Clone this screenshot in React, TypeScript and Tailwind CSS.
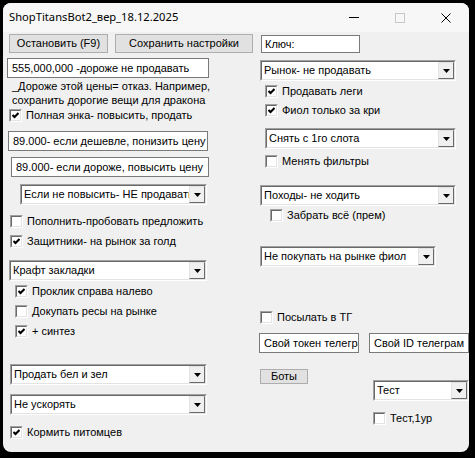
import React from 'react';

// Classic WinForms bits: sunken combo, 3D checkbox, flat textbox and button.

function TextBox({ text, className }: { text: string; className?: string }) {
  return (
    <div className={`h-5 bg-white border border-[#7a7a7a] pl-[4px] flex items-center whitespace-nowrap overflow-hidden ${className ?? ''}`}>
      {text}
    </div>
  );
}

function Button({ label, className }: { label: string; className?: string }) {
  return (
    <div className={`bg-[#e1e1e1] border border-[#adadad] flex items-center justify-center whitespace-nowrap ${className ?? ''}`}>
      {label}
    </div>
  );
}

function Check({ label, checked, className }: { label: string; checked?: boolean; className?: string }) {
  return (
    <div className={`h-4 flex items-center gap-[4px] whitespace-nowrap ${className ?? ''}`}>
      <span className="w-[13px] h-[13px] shrink-0 border border-t-[#a0a0a0] border-l-[#a0a0a0] border-r-white border-b-white">
        <span className="w-full h-full flex items-center justify-center bg-white border border-t-[#696969] border-l-[#696969] border-r-[#e3e3e3] border-b-[#e3e3e3]">
          {checked && (
            <svg width="7" height="7" viewBox="0 0 7 7">
              <path d="M0.5 3 L2.5 5 L6.5 1" fill="none" stroke="#000" strokeWidth="2" />
            </svg>
          )}
        </span>
      </span>
      <span>{label}</span>
    </div>
  );
}

function Combo({ label, className }: { label: string; className?: string }) {
  return (
    <div className={`h-[21px] flex border border-t-[#a0a0a0] border-l-[#a0a0a0] border-r-white border-b-white ${className ?? ''}`}>
      <div className="flex-1 min-w-0 flex bg-white border border-t-[#696969] border-l-[#696969] border-r-[#e3e3e3] border-b-[#e3e3e3]">
        <span className="flex-1 min-w-0 overflow-hidden whitespace-nowrap pl-[2px] leading-[17px]">{label}</span>
        <span className="w-[16px] h-full shrink-0 flex items-center justify-center bg-[#f0f0f0] border border-t-[#e3e3e3] border-l-[#e3e3e3] border-r-[#696969] border-b-[#696969]">
          <svg width="7" height="4" viewBox="0 0 7 4">
            <path d="M0 0 H7 L3.5 4 Z" fill="#000" />
          </svg>
        </span>
      </div>
    </div>
  );
}

export default function App() {
  return (
    <div className="w-[475px] h-[458px] bg-black p-[3px]">
      <div className="w-[466px] h-[449px] rounded-[8px] overflow-hidden bg-[#f0f0f0] flex flex-col">
        <div className="h-[29px] shrink-0 flex items-center bg-[#f7f7f7]">
          <span className="flex-1 pl-[6px] text-[11.2px] text-black font-['Noto_Sans',sans-serif]">ShopTitansBot2_вер_18.12.2025</span>
          <span className="w-[46px] h-full flex items-center justify-center">
            <span className="w-[10px] h-px bg-black" />
          </span>
          <span className="w-[46px] h-full flex items-center justify-center">
            <span className="w-[10px] h-[10px] border border-[#c8c8c8]" />
          </span>
          <span className="w-[46px] h-full flex items-center justify-center">
            <svg width="10" height="10" viewBox="0 0 10 10">
              <path d="M0.5 0.5 L9.5 9.5 M9.5 0.5 L0.5 9.5" stroke="#000" strokeWidth="1" />
            </svg>
          </span>
        </div>

        <div className="flex-1 flex flex-col text-[11px] text-black font-['Liberation_Sans',Arial,sans-serif]">
          <div className="flex items-start mt-[2px] pl-[6px]">
            <Button label="Остановить (F9)" className="w-[99px] h-[19px]" />
            <Button label="Сохранить настройки" className="ml-[7px] w-[138px] h-[19px]" />
            <div className="ml-[8px] mt-px w-[99px] h-[18px] bg-white border border-[#7a7a7a] pl-[3px] flex items-center">Ключ:</div>
          </div>

          <div className="flex items-start">
            <div className="ml-[4px] w-[206px] mt-[5px] flex flex-col items-start">
              <TextBox text="555,000,000 -дороже не продавать" className="w-[202px]" />
              <div className="ml-[5px] mt-px leading-[14px]">
                _Дороже этой цены= отказ. Например,
                <br />
                сохранить дорогие вещи для дракона
              </div>
              <Check label="Полная энка- повысить, продать" checked className="ml-[2px]" />
              <TextBox text="89.000- если дешевле, понизить цену" className="mt-[8px] ml-px w-[200px]" />
              <TextBox text="89.000- если дороже, повысить цену" className="mt-[6px] ml-[4px] w-[198px]" />
              <Combo label="Если не повысить- НЕ продавать" className="mt-[7px] ml-[13px] w-[187px]" />
              <Check label="Пополнить-пробовать предложить" className="mt-[8px] ml-[3px]" />
              <Check label="Защитники- на рынок за голд" checked className="mt-[4px] ml-[3px]" />
              <Combo label="Крафт закладки" className="mt-[11px] ml-[2px] w-[198px]" />
              <Check label="Проклик справа налево" checked className="mt-[2px] ml-[8px]" />
              <Check label="Докупать ресы на рынке" className="mt-[4px] ml-[8px]" />
              <Check label="+ синтез" checked className="mt-[4px] ml-[8px]" />
              <Combo label="Продать бел и зел" className="mt-[25px] ml-[3px] w-[197px]" />
              <Combo label="Не ускорять" className="mt-[9px] ml-[3px] w-[197px]" />
              <Check label="Кормить питомцев" checked className="mt-[9px] ml-[3px]" />
            </div>

            <div className="ml-[46px] w-[210px] mt-[7px] flex flex-col items-start">
              <Combo label="Рынок- не продавать" className="ml-px w-[196px]" />
              <Check label="Продавать леги" checked className="mt-[2px] ml-[6px]" />
              <Check label="Фиол только за кри" checked className="mt-[3px] ml-[6px]" />
              <Combo label="Снять с 1го слота" className="mt-[10px] ml-[6px] w-[191px]" />
              <Check label="Менять фильтры" className="mt-[4px] ml-[6px]" />
              <Combo label="Походы- не ходить" className="mt-[16px] ml-px w-[196px]" />
              <Check label="Забрать всё (прем)" className="mt-px ml-[11px]" />
              <Combo label="Не покупать на рынке фиол" className="mt-[23px] ml-px w-[176px]" />
              <Check label="Посылать в ТГ" className="mt-[42px] ml-px" />
              <div className="mt-[8px] flex">
                <TextBox text="Свой токен телеграм" className="w-[100px]" />
                <TextBox text="Свой ID телеграм" className="ml-[10px] w-[100px]" />
              </div>
              <div className="mt-[16px] flex items-start">
                <Button label="Боты" className="ml-px w-[48px] h-[15px]" />
                <div className="ml-[65px] mt-[11px] flex flex-col items-start">
                  <Combo label="Тест" className="w-[96px]" />
                  <Check label="Тест,1ур" className="mt-[9px]" />
                </div>
              </div>
            </div>
          </div>
        </div>
      </div>
    </div>
  );
}
